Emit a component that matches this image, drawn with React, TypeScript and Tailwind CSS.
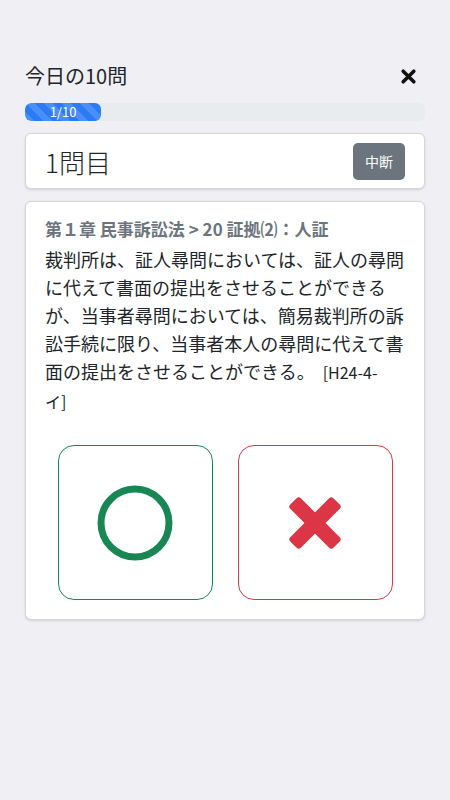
import React from 'react';

const font = { fontFamily: '"Noto Sans CJK JP", "Noto Sans", sans-serif' };

export default function App() {
  return (
    <div className="min-h-[800px] bg-[#efeff4] px-[25px] pt-[62px]" style={font}>
      {/* Header */}
      <div className="flex items-center justify-between h-[28px]">
        <h1 className="text-[20px] leading-[28px] text-[#212529]">今日の10問</h1>
        <button className="mr-[8px] text-[#111]">
          <svg width="17" height="17" viewBox="0 0 16 16">
            <path d="M3 3 L13 13 M13 3 L3 13" stroke="currentColor" strokeWidth="3.4" strokeLinecap="round" />
          </svg>
        </button>
      </div>

      {/* Progress */}
      <div className="mt-[13px] h-[18px] w-full rounded-md bg-[#e9ecef] overflow-hidden">
        <div
          className="h-full w-[76px] rounded-md bg-[#2a7bf6] flex items-center justify-center text-white text-[13px]"
          style={{
            backgroundImage:
              'linear-gradient(45deg, rgba(255,255,255,.15) 25%, transparent 25%, transparent 50%, rgba(255,255,255,.15) 50%, rgba(255,255,255,.15) 75%, transparent 75%, transparent)',
            backgroundSize: '18px 18px',
          }}
        >
          1/10
        </div>
      </div>

      {/* Question number */}
      <div className="mt-[12px] h-[56px] bg-white rounded-md border border-[#d6d6da] shadow-sm flex items-center justify-between pl-[19px] pr-[19px]">
        <span className="text-[26px] font-light text-[#212529]">1問目</span>
        <button className="h-[37px] w-[52px] rounded-[5px] bg-[#6c757d] text-white text-[14px]">中断</button>
      </div>

      {/* Question card */}
      <div className="mt-[12px] bg-white rounded-md border border-[#d6d6da] shadow-sm px-[19px] pt-[15px] pb-[19px]">
        <h2 className="text-[17px] leading-[24px] font-bold text-[#6c757d]">
          第１章 民事訴訟法 &gt; 20 証拠⑵：人証
        </h2>
        <p className="mt-[4px] text-[18px] leading-[28px] text-[#212529]">
          裁判所は、証人尋問においては、証人の尋問に代えて書面の提出をさせることができるが、当事者尋問においては、簡易裁判所の訴訟手続に限り、当事者本人の尋問に代えて書面の提出をさせることができる。
          <span className="ml-[8px] text-[16px] leading-[28px]">
            [H24-4-
            <br />
            イ]
          </span>
        </p>

        <div className="mt-[30px] flex justify-center gap-[25px]">
          <button className="h-[155px] w-[155px] rounded-[16px] border border-[#198754] bg-white flex items-center justify-center">
            <svg width="80" height="80" viewBox="0 0 80 80">
              <circle cx="40" cy="40" r="34" fill="none" stroke="#198754" strokeWidth="7" />
            </svg>
          </button>
          <button className="h-[155px] w-[155px] rounded-[16px] border border-[#dc3545] bg-white flex items-center justify-center">
            <svg width="60" height="60" viewBox="0 0 60 60">
              <rect x="-0.5" y="22.5" width="61" height="15" rx="3" fill="#dc3545" transform="rotate(45 30 30)" />
              <rect x="-0.5" y="22.5" width="61" height="15" rx="3" fill="#dc3545" transform="rotate(-45 30 30)" />
            </svg>
          </button>
        </div>
      </div>
    </div>
  );
}
